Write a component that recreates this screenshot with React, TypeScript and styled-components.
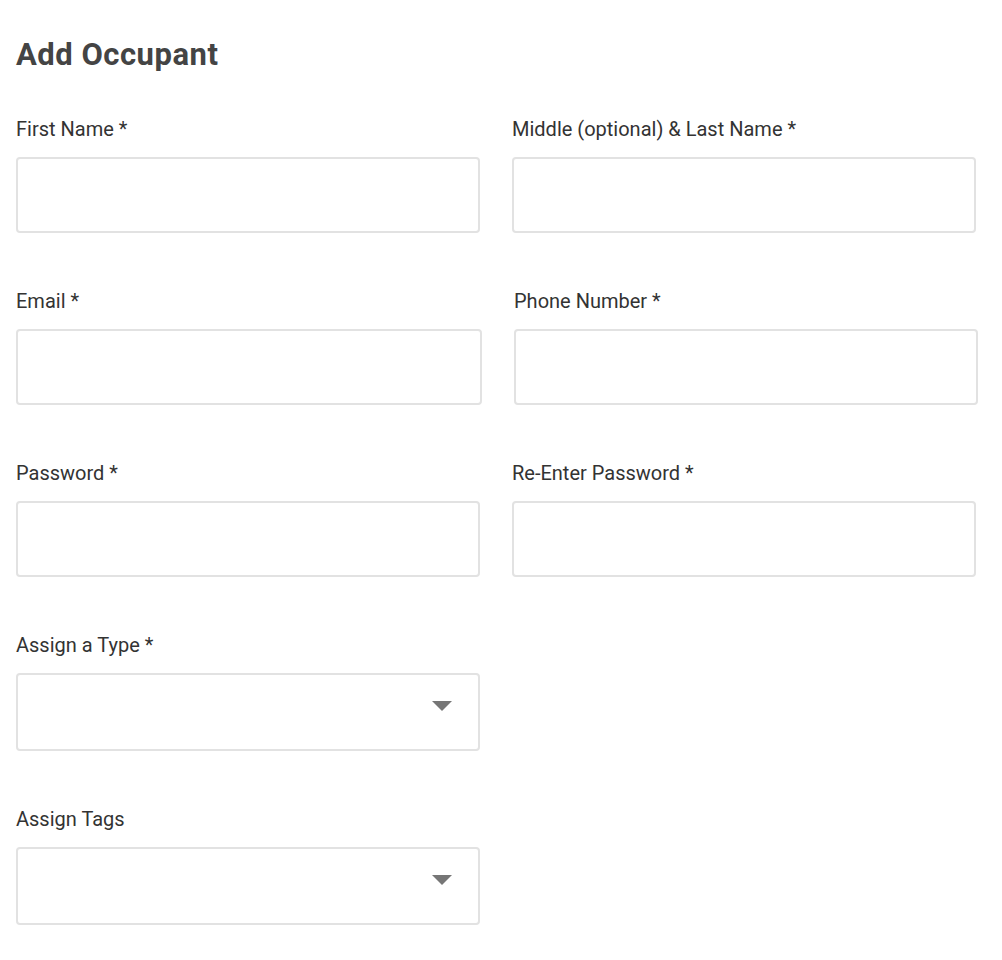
import styled, { createGlobalStyle } from 'styled-components';

const GlobalStyle = createGlobalStyle`
  body {
    margin: 0;
    background: #fff;
    font-family: Roboto, "Liberation Sans", Arial, sans-serif;
  }
`;

const Page = styled.main`
  box-sizing: border-box;
  width: 1002px;
  padding: 38px 16px 40px 16px;
  color: #333;
  h1 {
    margin: 0 0 46px 0;
    font-size: 31px;
    line-height: 34px;
    font-weight: 700;
    letter-spacing: 0.5px;
    color: #444;
  }
`;

const Form = styled.form`
  display: grid;
  grid-template-columns: 464px 464px;
  column-gap: 32px;
  row-gap: 57px;
`;

const Field = styled.label<{ $shift?: number }>`
  display: flex;
  flex-direction: column;
  margin-left: ${(p) => p.$shift ?? 0}px;
  span {
    display: block;
    font-size: 20px;
    line-height: 22px;
    margin-bottom: 17px;
    color: #333;
  }
`;

const Input = styled.input<{ $wide?: boolean }>`
  box-sizing: border-box;
  width: ${(p) => (p.$wide ? 466 : 464)}px;
  height: 76px;
  border: 2px solid #e2e2e2;
  border-radius: 4px;
  background: #fff;
  padding: 0 16px;
  font-family: inherit;
  font-size: 18px;
  outline: none;
`;

const Select = styled.div`
  position: relative;
  box-sizing: border-box;
  width: 464px;
  height: 78px;
  border: 2px solid #e2e2e2;
  border-radius: 4px;
  background: #fff;
`;

const Caret = styled.svg`
  position: absolute;
  right: 26px;
  top: 26px;
`;

const Spacer = styled.div``;

const DropDown = () => (
  <Select>
    <Caret width="20" height="10" viewBox="0 0 20 10">
      <path d="M0 0 L20 0 L10 10 Z" fill="#767676" />
    </Caret>
  </Select>
);

const App = () => {
  return (
    <Page>
      <GlobalStyle />
      <h1>Add Occupant</h1>
      <Form>
        <Field>
          <span>First Name *</span>
          <Input type="text" />
        </Field>
        <Field>
          <span>Middle (optional) &amp; Last Name *</span>
          <Input type="text" />
        </Field>
        <Field>
          <span>Email *</span>
          <Input type="email" $wide />
        </Field>
        <Field $shift={2}>
          <span>Phone Number *</span>
          <Input type="tel" />
        </Field>
        <Field>
          <span>Password *</span>
          <Input type="password" />
        </Field>
        <Field>
          <span>Re-Enter Password *</span>
          <Input type="password" />
        </Field>
        <Field>
          <span>Assign a Type *</span>
          <DropDown />
        </Field>
        <Spacer />
        <Field>
          <span>Assign Tags</span>
          <DropDown />
        </Field>
      </Form>
    </Page>
  );
};

export default App;
